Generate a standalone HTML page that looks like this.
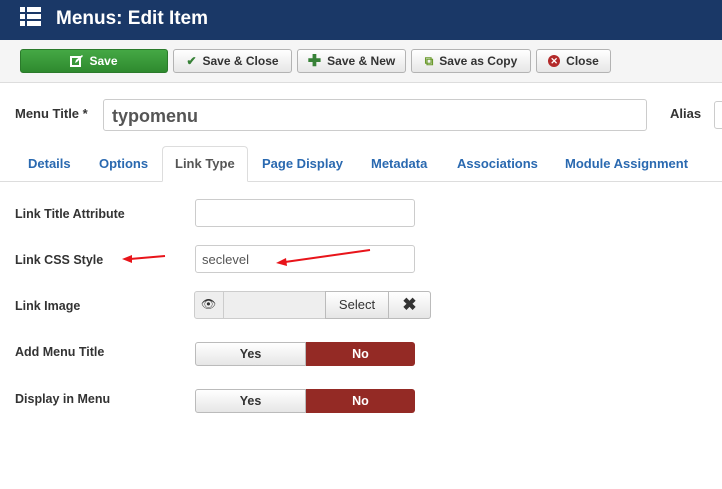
<!DOCTYPE html>
<html><head><style>
*{box-sizing:border-box;margin:0;padding:0}
body{width:722px;height:489px;overflow:hidden;background:#fff;font-family:"Liberation Sans",sans-serif;font-size:13px;color:#333;position:relative}
.a{position:absolute}
.hdr{left:0;top:0;width:722px;height:40px;background:#1a3867;color:#fff}
.hdr h1{position:absolute;left:56px;top:8px;font-size:19px;font-weight:bold}
.tb{left:0;top:40px;width:722px;height:43px;background:#f5f5f5;border-bottom:1px solid #ddd}
.btn{position:absolute;top:49px;height:24px;border:1px solid #b3b3b3;border-radius:3px;background:linear-gradient(#fff,#e6e6e6);font-size:12px;font-weight:bold;color:#333;display:flex;align-items:center;justify-content:center;gap:6px}
.lbl{position:absolute;left:15px;font-weight:bold;font-size:12.5px;color:#333}
.inp{position:absolute;border:1px solid #ccc;border-radius:3px;background:#fff}
.tab{position:absolute;top:156px;font-weight:bold;color:#2a69b0;font-size:13px}
.tg{position:absolute;left:195px;width:220px;height:24px;display:flex;font-weight:bold;font-size:12.5px}
.tg div{flex:1;display:flex;align-items:center;justify-content:center}
.y{border:1px solid #bbb;border-radius:3px 0 0 3px;background:linear-gradient(#fff,#e6e6e6)}
.n{background:#942a25;color:#fff;border-radius:0 3px 3px 0}
</style></head><body>
<div class="a hdr">
<svg class="a" style="left:20px;top:7px" width="21" height="19"><g fill="#fff"><rect x="0" y="0" width="5" height="5"/><rect x="7" y="0" width="14" height="5"/><rect x="0" y="7" width="5" height="5"/><rect x="7" y="7" width="14" height="5"/><rect x="0" y="14" width="5" height="5"/><rect x="7" y="14" width="14" height="5"/></g></svg>
<h1>Menus: Edit Item</h1></div>
<div class="a tb"></div>
<div class="btn" style="left:20px;width:148px;background:linear-gradient(#45a845,#2f8a2f);border-color:#2b7a2b;color:#fff"><svg width="13" height="12"><rect x="1" y="2" width="9" height="9" fill="none" stroke="#fff" stroke-width="2"/><path d="M5 8l1-3 6-5 1 1-6 6z" fill="#fff"/></svg>Save</div>
<div class="btn" style="left:173px;width:119px"><span style="color:#378137">✔</span>Save &amp; Close</div>
<div class="btn" style="left:297px;width:109px"><span style="color:#378137;font-size:16px">✚</span>Save &amp; New</div>
<div class="btn" style="left:411px;width:120px"><span style="color:#6a9a2c">⧉</span>Save as Copy</div>
<div class="btn" style="left:536px;width:75px"><span style="display:inline-block;width:12px;height:12px;border-radius:50%;background:#b32a2a;color:#fff;font-size:9px;line-height:12px;text-align:center">✕</span>Close</div>
<div class="lbl" style="top:106px;font-size:13px">Menu Title *</div>
<div class="inp" style="left:103px;top:99px;width:544px;height:32px;font-size:18px;font-weight:bold;color:#555;padding:6px 8px">typomenu</div>
<div class="lbl" style="left:670px;top:106px;font-size:13px">Alias</div>
<div class="inp" style="left:714px;top:101px;width:20px;height:28px"></div>
<div class="a" style="left:0;top:181px;width:722px;height:1px;background:#ddd"></div>
<div class="a" style="left:162px;top:146px;width:86px;height:36px;border:1px solid #ddd;border-bottom:1px solid #fff;border-radius:4px 4px 0 0;background:#fff"></div>
<div class="tab" style="left:28px">Details</div>
<div class="tab" style="left:99px">Options</div>
<div class="tab" style="left:175px;color:#555">Link Type</div>
<div class="tab" style="left:262px">Page Display</div>
<div class="tab" style="left:371px">Metadata</div>
<div class="tab" style="left:457px">Associations</div>
<div class="tab" style="left:565px">Module Assignment</div>
<div class="lbl" style="top:207px">Link Title Attribute</div>
<div class="inp" style="left:195px;top:199px;width:220px;height:28px"></div>
<div class="lbl" style="top:253px">Link CSS Style</div>
<div class="inp" style="left:195px;top:245px;width:220px;height:28px;padding:6px 6px;color:#555">seclevel</div>
<div class="lbl" style="top:299px">Link Image</div>
<div class="a" style="left:194px;top:291px;width:237px;height:28px;border:1px solid #ccc;border-radius:3px;background:#eee"></div>
<div class="a" style="left:223px;top:292px;width:1px;height:26px;background:#ccc"></div>
<div class="a" style="left:201px;top:297px;font-size:12px">👁</div>
<div class="a" style="left:325px;top:291px;width:64px;height:28px;border:1px solid #bbb;background:linear-gradient(#fff,#e6e6e6);text-align:center;line-height:26px">Select</div>
<div class="a" style="left:388px;top:291px;width:43px;height:28px;border:1px solid #bbb;border-radius:0 3px 3px 0;background:linear-gradient(#fff,#e6e6e6);text-align:center;line-height:26px;font-weight:bold;font-size:17px">✖</div>
<div class="lbl" style="top:345px">Add Menu Title</div>
<div class="tg" style="top:342px"><div class="y">Yes</div><div class="n">No</div></div>
<div class="lbl" style="top:392px">Display in Menu</div>
<div class="tg" style="top:389px"><div class="y">Yes</div><div class="n">No</div></div>
<svg class="a" style="left:0;top:0" width="722" height="489"><g stroke="#e8141a" stroke-width="2" fill="#e8141a"><line x1="165" y1="256" x2="130" y2="259"/><path d="M122 259l10-4v8z" stroke="none"/><line x1="370" y1="250" x2="285" y2="262"/><path d="M276 263l10-5 1 8z" stroke="none"/></g></svg>
</body></html>
